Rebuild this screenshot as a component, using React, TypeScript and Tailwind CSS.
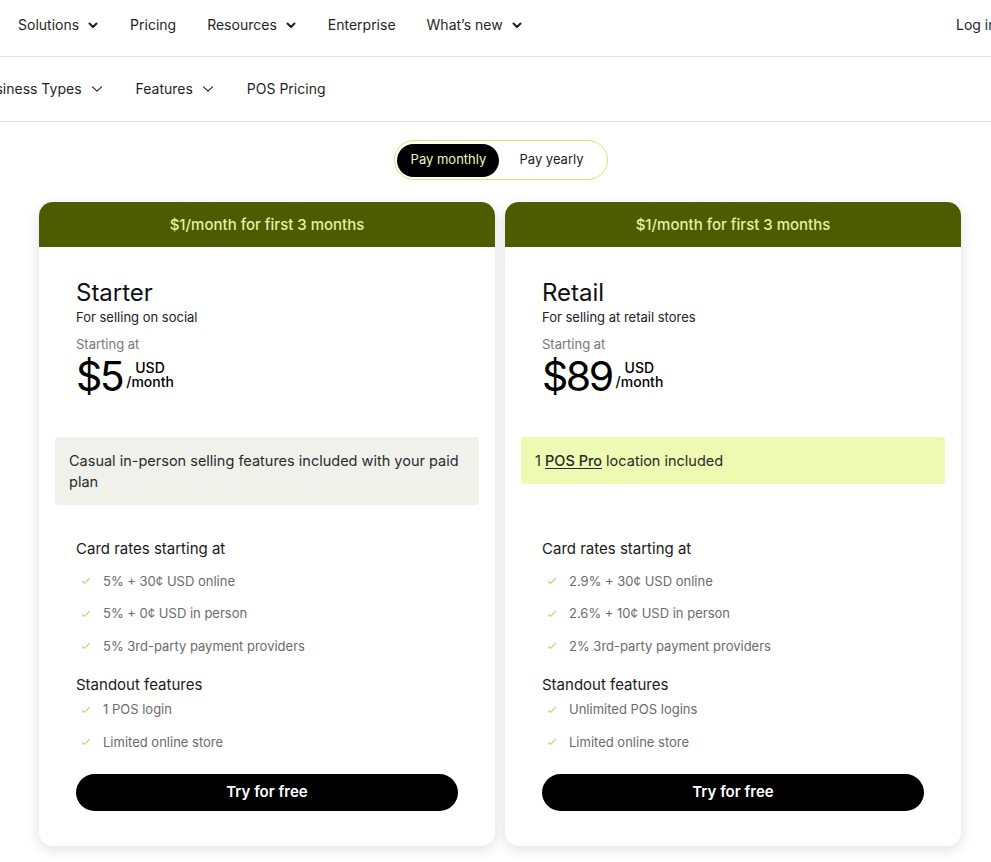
import React from 'react';

const Chevron: React.FC<{ thin?: boolean }> = ({ thin = false }) => (
  <svg width="12" height="12" viewBox="0 0 12 12" fill="none" className={thin ? 'ml-[9px]' : 'ml-[8px]'}>
    <path
      d={thin ? 'M1.5 3.8L6 8.2l4.5-4.4' : 'M2.5 4.5L6 8l3.5-3.5'}
      stroke="currentColor"
      strokeWidth={thin ? 1.1 : 2}
      strokeLinecap="round"
      strokeLinejoin="round"
    />
  </svg>
);

const Check: React.FC = () => (
  <svg width="10" height="10" viewBox="0 0 10 10" fill="none" className="shrink-0">
    <path d="M1.5 5.5l2 1.8L8.5 2.5" stroke="#c2d46a" strokeWidth="1.1" strokeLinecap="round" strokeLinejoin="round" />
  </svg>
);

interface Plan {
  name: string;
  tagline: string;
  price: string;
  note: React.ReactNode;
  noteClass: string;
  headingGap: string;
  rates: string[];
  features: string[];
}

const plans: Plan[] = [
  {
    name: 'Starter',
    tagline: 'For selling on social',
    price: '$5',
    note: 'Casual in-person selling features included with your paid plan',
    noteClass: 'bg-[#f1f1ec]',
    headingGap: 'mt-[34px]',
    rates: ['5% + 30¢ USD online', '5% + 0¢ USD in person', '5% 3rd-party payment providers'],
    features: ['1 POS login', 'Limited online store'],
  },
  {
    name: 'Retail',
    tagline: 'For selling at retail stores',
    price: '$89',
    note: (
      <>
        1 <span className="font-medium underline underline-offset-2">POS Pro</span> location included
      </>
    ),
    noteClass: 'bg-[#eef9b2]',
    headingGap: 'mt-[55px]',
    rates: ['2.9% + 30¢ USD online', '2.6% + 10¢ USD in person', '2% 3rd-party payment providers'],
    features: ['Unlimited POS logins', 'Limited online store'],
  },
];

const ListItem: React.FC<{ text: string }> = ({ text }) => (
  <li className="flex items-center gap-[12px] pl-[5px] text-[13px] text-[#6b6b6b] h-[32.5px]">
    <Check />
    <span>{text}</span>
  </li>
);

const PlanCard: React.FC<{ plan: Plan }> = ({ plan }) => (
  <div className="w-[456px] rounded-[14px] bg-white shadow-[0_4px_14px_rgba(0,0,0,0.12)] overflow-hidden">
    <div className="h-[45px] pt-[1px] bg-[#4d5c00] flex items-center justify-center text-[15px] font-medium text-[#e3f1a2]">
      $1/month for first 3 months
    </div>
    <div className="px-[16px] pb-[35px]">
      <div className="px-[21px] pt-[31px]">
        <h2 className="text-[24px] leading-[30px] text-[#111]">{plan.name}</h2>
        <p className="text-[13px] leading-[18px] text-[#222]">{plan.tagline}</p>
        <p className="mt-[9px] text-[13px] leading-[18px] text-[#777]">Starting at</p>
        <div className="flex items-start">
          <span className="pr-[4px] text-[41px] leading-[46px] tracking-[-2.5px] text-black">{plan.price}</span>
          <div className="mt-[8px] flex flex-col text-[14px] leading-[14px] font-medium text-black">
            <span className="pl-[9px]">USD</span>
            <span>/month</span>
          </div>
        </div>
      </div>
      <div className={`mt-[38px] rounded-[3px] px-[14px] py-[13px] text-[14.5px] leading-[21px] text-[#2a2a2a] ${plan.noteClass}`}>
        {plan.note}
      </div>
      <div className="px-[21px]">
        <h3 className={`${plan.headingGap} text-[15px] leading-[20px] text-[#1a1a1a]`}>Card rates starting at</h3>
        <ul className="mt-[6px]">
          {plan.rates.map((r) => (
            <ListItem key={r} text={r} />
          ))}
        </ul>
        <h3 className="mt-[12px] text-[15px] leading-[20px] text-[#1a1a1a]">Standout features</h3>
        <ul className="-mt-[1px]">
          {plan.features.map((f) => (
            <ListItem key={f} text={f} />
          ))}
        </ul>
        <button className="mt-[15px] w-full h-[37px] rounded-full bg-black text-white text-[15px] font-semibold">
          Try for free
        </button>
      </div>
    </div>
  </div>
);

export default function App() {
  return (
    <div className="w-[991px] h-[862px] overflow-hidden bg-white font-['Inter',sans-serif] text-[#1f1f1f]">
      <header className="h-[57px] border-b border-[#e3e3e3] flex items-start pt-[15px] px-[18px] text-[14px] leading-[20px]">
        <nav className="flex items-center gap-[31px]">
          <span className="flex items-center">Solutions<Chevron /></span>
          <span>Pricing</span>
          <span className="flex items-center">Resources<Chevron /></span>
          <span>Enterprise</span>
          <span className="flex items-center">What’s new<Chevron /></span>
        </nav>
        <span className="ml-auto -mr-[18px] w-[35px] overflow-hidden whitespace-nowrap">Log in</span>
      </header>
      <div className="h-[65px] border-b border-[#e3e3e3] flex items-center text-[14px] -ml-[22px] gap-[33px] pb-[1px]">
        <span className="flex items-center">Business Types<Chevron thin /></span>
        <span className="flex items-center">Features<Chevron thin /></span>
        <span>POS Pricing</span>
      </div>
      <div className="flex justify-center pt-[18px] pl-[11px]">
        <div className="flex items-center rounded-full border-[1.5px] border-[#d3e66a] p-[2.5px] text-[13px]">
          <span className="h-[33px] w-[102px] flex items-center justify-center rounded-full bg-black text-[#eef5c8]">Pay monthly</span>
          <span className="h-[33px] pl-[20px] pr-[21px] flex items-center text-[#1a1a1a]">Pay yearly</span>
        </div>
      </div>
      <div className="flex gap-[10px] pl-[39px] pt-[22px] items-start">
        {plans.map((p) => (
          <PlanCard key={p.name} plan={p} />
        ))}
      </div>
    </div>
  );
}
